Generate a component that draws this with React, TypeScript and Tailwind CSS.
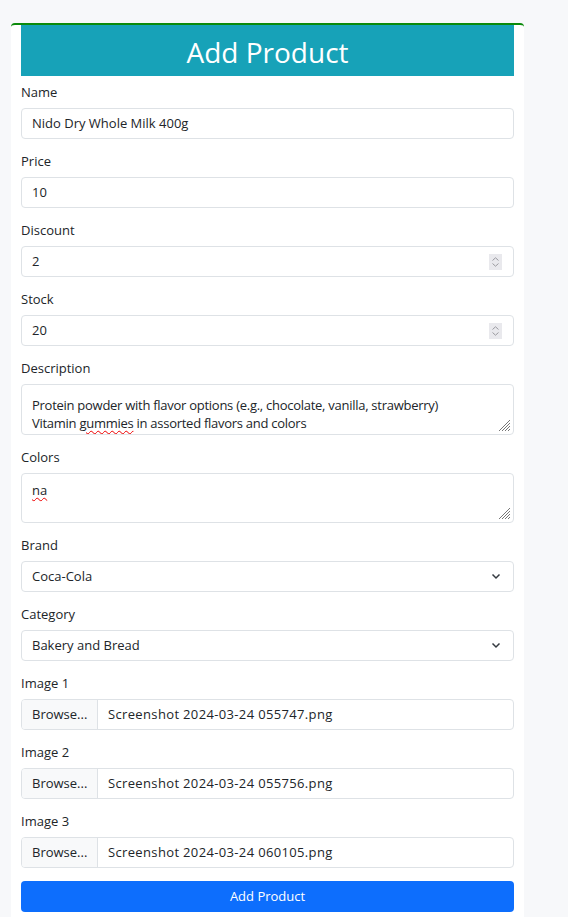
import React from 'react'

const font = { fontFamily: '"Open Sans", "Noto Sans", sans-serif' }

function Label({ children }: { children: React.ReactNode }) {
  return <div className="text-[13px] leading-[20px] mb-[6px] text-[#212529]">{children}</div>
}

function Spinner() {
  return (
    <div className="w-[13px] h-[16px] bg-[#e9e9ed] flex flex-col items-center justify-center gap-[2px]">
      <svg width="7" height="4" viewBox="0 0 7 4"><path d="M0.5 3.5 L3.5 0.8 L6.5 3.5" fill="none" stroke="#9a9aa0" strokeWidth="1" /></svg>
      <svg width="7" height="4" viewBox="0 0 7 4"><path d="M0.5 0.5 L3.5 3.2 L6.5 0.5" fill="none" stroke="#9a9aa0" strokeWidth="1" /></svg>
    </div>
  )
}

function Grip() {
  return (
    <svg width="12" height="12" viewBox="0 0 12 12" className="absolute right-[2px] bottom-[2px]">
      <path d="M11 3 L3 11 M11 6 L6 11 M11 9 L9 11 M11 0 L0 11" stroke="#777" strokeWidth="1" />
    </svg>
  )
}

function Chevron() {
  return (
    <svg width="10" height="7" viewBox="0 0 10 7">
      <path d="M1.5 1.5 L5 5 L8.5 1.5" fill="none" stroke="#343a40" strokeWidth="1.5" />
    </svg>
  )
}

function TextField({ label, value, spin }: { label: string; value: string; spin?: boolean }) {
  return (
    <div className="mb-[12px]">
      <Label>{label}</Label>
      <div className="h-[31px] border border-[#dee2e6] rounded-[4px] bg-white flex items-center pl-[10px] pr-[11px] text-[13px] text-[#212529]">
        <span className="flex-1">{value}</span>
        {spin && <Spinner />}
      </div>
    </div>
  )
}

function AreaField({ label, pad, children }: { label: string; pad: string; children: React.ReactNode }) {
  return (
    <div className="mb-[12px]">
      <Label>{label}</Label>
      <div className={`relative h-[50.5px] border border-[#dee2e6] rounded-[4px] bg-white pl-[10px] text-[13px] leading-[18px] text-[#212529] overflow-hidden ${pad}`}>
        {children}
        <Grip />
      </div>
    </div>
  )
}

function SelectField({ label, value }: { label: string; value: string }) {
  return (
    <div className="mb-[12px]">
      <Label>{label}</Label>
      <div className="h-[31px] border border-[#dee2e6] rounded-[4px] bg-white flex items-center pl-[10px] pr-[12px] text-[13px] text-[#212529]">
        <span className="flex-1">{value}</span>
        <Chevron />
      </div>
    </div>
  )
}

function FileField({ label, file }: { label: string; file: string }) {
  return (
    <div className="mb-[12px]">
      <Label>{label}</Label>
      <div className="h-[31px] border border-[#dee2e6] rounded-[4px] bg-white flex items-stretch text-[13px] text-[#212529] overflow-hidden">
        <div className="w-[76px] bg-[#f8f9fa] border-r border-[#dee2e6] flex items-center pl-[10px]">Browse...</div>
        <div className="flex items-center pl-[10px] tracking-[0.35px]">{file}</div>
      </div>
    </div>
  )
}

const wavy = 'underline decoration-wavy decoration-[#e00] decoration-1 underline-offset-[2px]'

export default function App() {
  return (
    <div className="min-h-[917px] bg-[#f7f8fa] pt-[23px] pl-[11px]" style={font}>
      <div className="w-[513px] bg-white border-t-2 border-[#0b8a0b] rounded-t-[4px] px-[10px] pb-[20px]">
        <div className="h-[51px] bg-[#17a2b8] flex items-center justify-center pt-[3px] text-white text-[28px]">Add Product</div>
        <div className="pt-[6px]">
          <TextField label="Name" value="Nido Dry Whole Milk 400g" />
          <TextField label="Price" value="10" />
          <TextField label="Discount" value="2" spin />
          <TextField label="Stock" value="20" spin />
          <AreaField label="Description" pad="pt-[11px]">
            <div className="tracking-[-0.27px]">Protein powder with flavor options (e.g., chocolate, vanilla, strawberry)</div>
            <div className="tracking-[-0.27px]">Vitamin <span className={wavy}>gummies</span> in assorted flavors and colors</div>
          </AreaField>
          <AreaField label="Colors" pad="pt-[7px]">
            <div><span className={wavy}>na</span></div>
          </AreaField>
          <SelectField label="Brand" value="Coca-Cola" />
          <SelectField label="Category" value="Bakery and Bread" />
          <FileField label="Image 1" file="Screenshot 2024-03-24 055747.png" />
          <FileField label="Image 2" file="Screenshot 2024-03-24 055756.png" />
          <FileField label="Image 3" file="Screenshot 2024-03-24 060105.png" />
          <button className="mt-[1px] w-full h-[31px] bg-[#0d6efd] rounded-[4px] text-white text-[13px]">Add Product</button>
        </div>
      </div>
    </div>
  )
}
